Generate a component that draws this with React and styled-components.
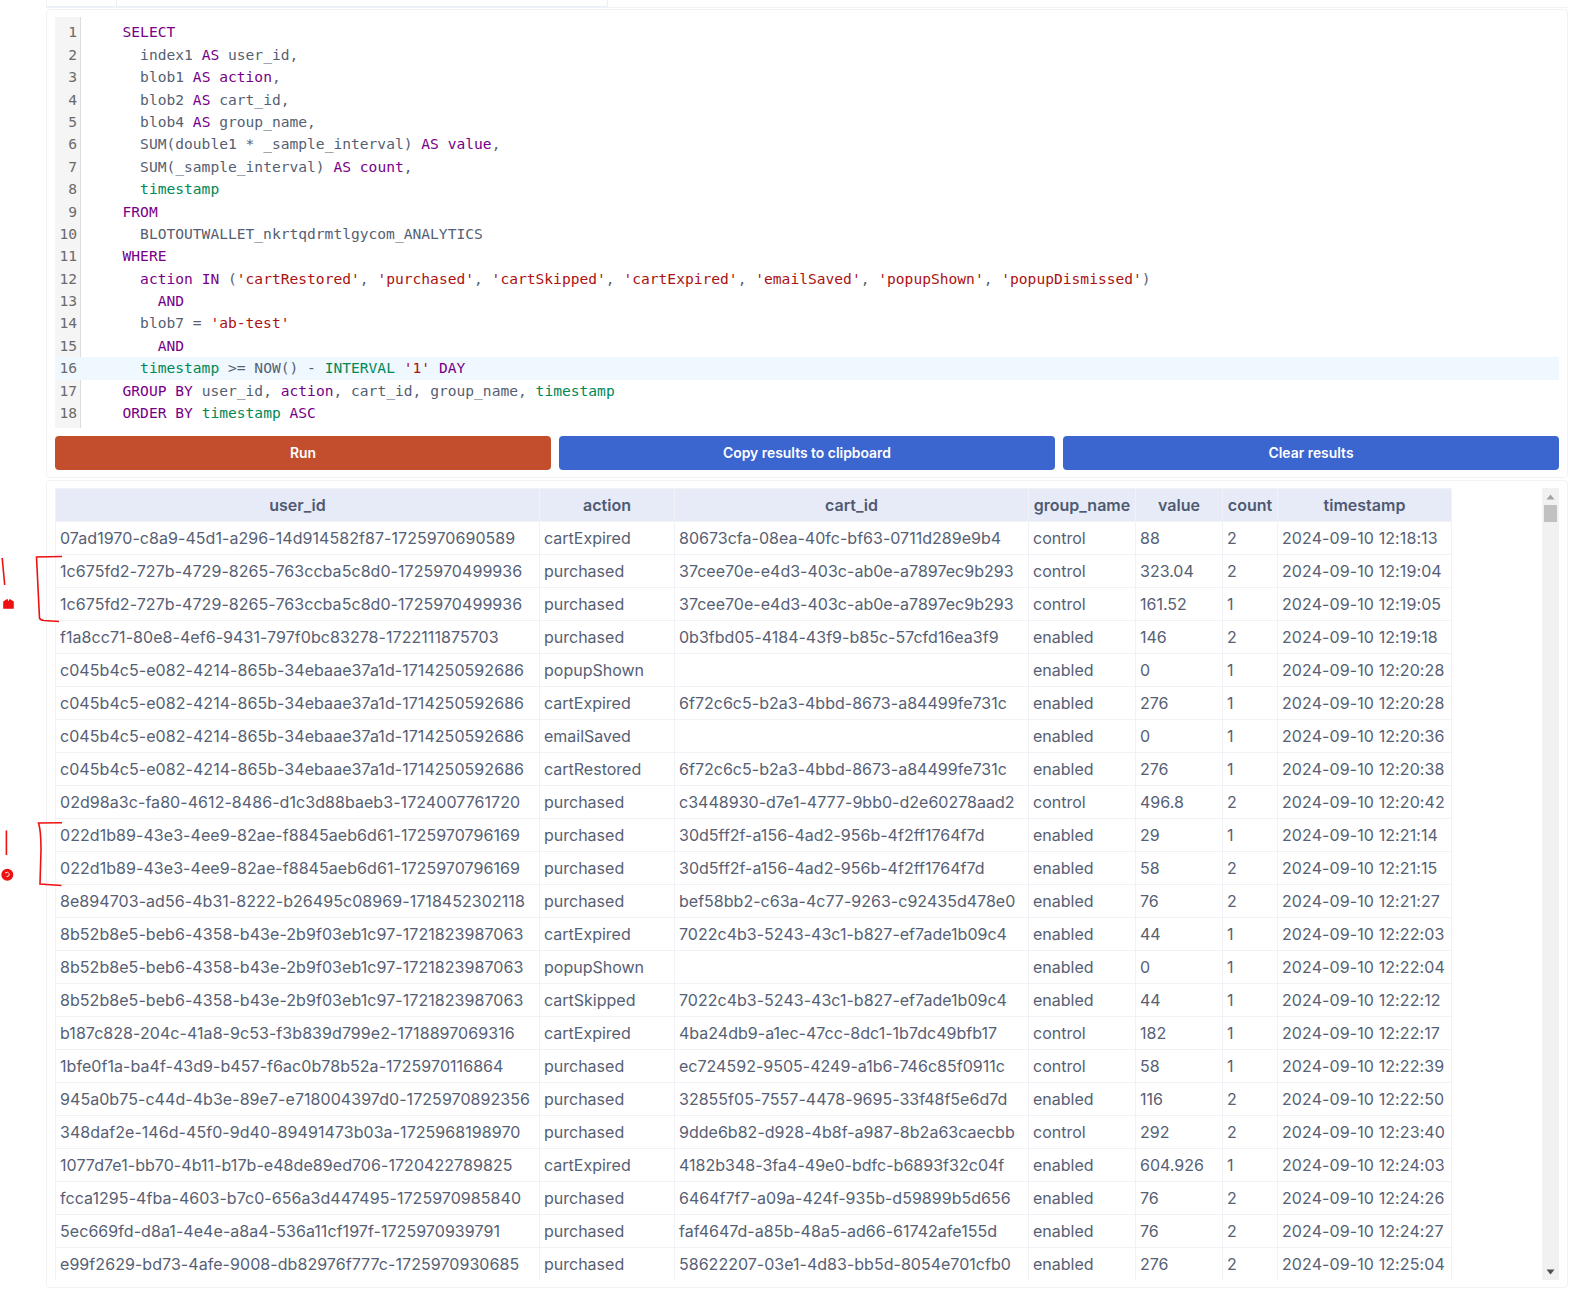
import React from "react";
import styled, { createGlobalStyle } from "styled-components";

const GlobalStyle = createGlobalStyle`
  html, body {
    margin: 0;
    padding: 0;
    background: #ffffff;
  }
`;

// Data
const SQL_LINES = [
  "    SELECT",
  "      index1 AS user_id,",
  "      blob1 AS action,",
  "      blob2 AS cart_id,",
  "      blob4 AS group_name,",
  "      SUM(double1 * _sample_interval) AS value,",
  "      SUM(_sample_interval) AS count,",
  "      timestamp",
  "    FROM",
  "      BLOTOUTWALLET_nkrtqdrmtlgycom_ANALYTICS",
  "    WHERE",
  "      action IN ('cartRestored', 'purchased', 'cartSkipped', 'cartExpired', 'emailSaved', 'popupShown', 'popupDismissed')",
  "        AND",
  "      blob7 = 'ab-test'",
  "        AND",
  "      timestamp >= NOW() - INTERVAL '1' DAY",
  "    GROUP BY user_id, action, cart_id, group_name, timestamp",
  "    ORDER BY timestamp ASC",
];

const KEYWORDS = new Set(["SELECT", "AS", "FROM", "WHERE", "IN", "AND", "GROUP", "BY", "ORDER", "ASC", "DAY", "action", "value", "count"]);
const BUILTINS = new Set(["timestamp", "INTERVAL"]);

const COLUMNS = [
  { name: "user_id", width: 484, spacing: 0.06 },
  { name: "action", width: 135, spacing: 0 },
  { name: "cart_id", width: 354, spacing: 0.02 },
  { name: "group_name", width: 107, spacing: 0 },
  { name: "value", width: 87, spacing: 0 },
  { name: "count", width: 55, spacing: 0 },
  { name: "timestamp", width: 174, spacing: 0.1 },
];

const ROWS = [
  ["07ad1970-c8a9-45d1-a296-14d914582f87-1725970690589", "cartExpired", "80673cfa-08ea-40fc-bf63-0711d289e9b4", "control", "88", "2", "2024-09-10 12:18:13"],
  ["1c675fd2-727b-4729-8265-763ccba5c8d0-1725970499936", "purchased", "37cee70e-e4d3-403c-ab0e-a7897ec9b293", "control", "323.04", "2", "2024-09-10 12:19:04"],
  ["1c675fd2-727b-4729-8265-763ccba5c8d0-1725970499936", "purchased", "37cee70e-e4d3-403c-ab0e-a7897ec9b293", "control", "161.52", "1", "2024-09-10 12:19:05"],
  ["f1a8cc71-80e8-4ef6-9431-797f0bc83278-1722111875703", "purchased", "0b3fbd05-4184-43f9-b85c-57cfd16ea3f9", "enabled", "146", "2", "2024-09-10 12:19:18"],
  ["c045b4c5-e082-4214-865b-34ebaae37a1d-1714250592686", "popupShown", "", "enabled", "0", "1", "2024-09-10 12:20:28"],
  ["c045b4c5-e082-4214-865b-34ebaae37a1d-1714250592686", "cartExpired", "6f72c6c5-b2a3-4bbd-8673-a84499fe731c", "enabled", "276", "1", "2024-09-10 12:20:28"],
  ["c045b4c5-e082-4214-865b-34ebaae37a1d-1714250592686", "emailSaved", "", "enabled", "0", "1", "2024-09-10 12:20:36"],
  ["c045b4c5-e082-4214-865b-34ebaae37a1d-1714250592686", "cartRestored", "6f72c6c5-b2a3-4bbd-8673-a84499fe731c", "enabled", "276", "1", "2024-09-10 12:20:38"],
  ["02d98a3c-fa80-4612-8486-d1c3d88baeb3-1724007761720", "purchased", "c3448930-d7e1-4777-9bb0-d2e60278aad2", "control", "496.8", "2", "2024-09-10 12:20:42"],
  ["022d1b89-43e3-4ee9-82ae-f8845aeb6d61-1725970796169", "purchased", "30d5ff2f-a156-4ad2-956b-4f2ff1764f7d", "enabled", "29", "1", "2024-09-10 12:21:14"],
  ["022d1b89-43e3-4ee9-82ae-f8845aeb6d61-1725970796169", "purchased", "30d5ff2f-a156-4ad2-956b-4f2ff1764f7d", "enabled", "58", "2", "2024-09-10 12:21:15"],
  ["8e894703-ad56-4b31-8222-b26495c08969-1718452302118", "purchased", "bef58bb2-c63a-4c77-9263-c92435d478e0", "enabled", "76", "2", "2024-09-10 12:21:27"],
  ["8b52b8e5-beb6-4358-b43e-2b9f03eb1c97-1721823987063", "cartExpired", "7022c4b3-5243-43c1-b827-ef7ade1b09c4", "enabled", "44", "1", "2024-09-10 12:22:03"],
  ["8b52b8e5-beb6-4358-b43e-2b9f03eb1c97-1721823987063", "popupShown", "", "enabled", "0", "1", "2024-09-10 12:22:04"],
  ["8b52b8e5-beb6-4358-b43e-2b9f03eb1c97-1721823987063", "cartSkipped", "7022c4b3-5243-43c1-b827-ef7ade1b09c4", "enabled", "44", "1", "2024-09-10 12:22:12"],
  ["b187c828-204c-41a8-9c53-f3b839d799e2-1718897069316", "cartExpired", "4ba24db9-a1ec-47cc-8dc1-1b7dc49bfb17", "control", "182", "1", "2024-09-10 12:22:17"],
  ["1bfe0f1a-ba4f-43d9-b457-f6ac0b78b52a-1725970116864", "purchased", "ec724592-9505-4249-a1b6-746c85f0911c", "control", "58", "1", "2024-09-10 12:22:39"],
  ["945a0b75-c44d-4b3e-89e7-e718004397d0-1725970892356", "purchased", "32855f05-7557-4478-9695-33f48f5e6d7d", "enabled", "116", "2", "2024-09-10 12:22:50"],
  ["348daf2e-146d-45f0-9d40-89491473b03a-1725968198970", "purchased", "9dde6b82-d928-4b8f-a987-8b2a63caecbb", "control", "292", "2", "2024-09-10 12:23:40"],
  ["1077d7e1-bb70-4b11-b17b-e48de89ed706-1720422789825", "cartExpired", "4182b348-3fa4-49e0-bdfc-b6893f32c04f", "enabled", "604.926", "1", "2024-09-10 12:24:03"],
  ["fcca1295-4fba-4603-b7c0-656a3d447495-1725970985840", "purchased", "6464f7f7-a09a-424f-935b-d59899b5d656", "enabled", "76", "2", "2024-09-10 12:24:26"],
  ["5ec669fd-d8a1-4e4e-a8a4-536a11cf197f-1725970939791", "purchased", "faf4647d-a85b-48a5-ad66-61742afe155d", "enabled", "76", "2", "2024-09-10 12:24:27"],
  ["e99f2629-bd73-4afe-9008-db82976f777c-1725970930685", "purchased", "58622207-03e1-4d83-bb5d-8054e701cfb0", "enabled", "276", "2", "2024-09-10 12:25:04"],
];

// Styled Components
const Page = styled.div`
  position: relative;
  width: 1522px;
  height: 1295px;
  margin-left: 46px;
  font-family: Inter, "Liberation Sans", sans-serif;
`;

const TabStrip = styled.div`
  display: flex;
  height: 7px;
  margin-bottom: 1px;
  border-bottom: 1px solid #f1f2f7;
  box-sizing: content-box;
`;

const TabStub = styled.div`
  width: ${({ $width }) => $width}px;
  height: 6px;
  border-bottom: 1px solid #e9f0f8;
  border-right: 1px solid #eeeff6;
  border-left: ${({ $first }) => ($first ? "1px solid #f1f2f7" : "none")};
`;

const Card = styled.section`
  border: 1px solid #f1f2f7;
  border-radius: 4px;
  padding: 7px 8px;
  background: #ffffff;
  margin-bottom: 2px;
`;

const Editor = styled.div`
  display: flex;
  flex-direction: column;
  padding: 4.4px 0 3.6px;
  background: linear-gradient(to right, #f5f5f5 25px, #dddddd 25px, #dddddd 26px, #ffffff 26px);
  font-family: "DejaVu Sans Mono", "Liberation Mono", monospace;
  font-size: 14.6px;
  line-height: 22.4px;
  color: #555f73;
`;

const CodeLine = styled.div`
  display: flex;
  height: 22.4px;
  background: ${({ $active }) => ($active ? "#f0f8ff" : "transparent")};
  white-space: pre;
`;

const LineNumber = styled.div`
  width: 22px;
  padding-right: 4px;
  margin-right: 6.4px;
  text-align: right;
  color: #6a6a6a;
  flex: none;
`;

const Token = styled.span`
  color: ${({ $kind }) =>
    ({ keyword: "#770088", builtin: "#008855", string: "#aa1111" }[$kind] || "inherit")};
`;

const ButtonRow = styled.div`
  display: flex;
  gap: 8px;
  margin-top: 8px;
`;

const ActionButton = styled.button`
  flex: 1;
  height: 34px;
  border: none;
  border-radius: 4px;
  background: ${({ $danger }) => ($danger ? "#c24e2d" : "#3b65cf")};
  color: #ffffff;
  font-family: inherit;
  font-size: 13.9px;
  font-weight: 600;
  cursor: pointer;
`;

const ResultsArea = styled.div`
  display: flex;
  justify-content: space-between;
  height: 792px;
  overflow: hidden;
`;

const ResultsTable = styled.table`
  width: 1396px;
  height: 792px;
  table-layout: fixed;
  border-collapse: collapse;
  font-size: 16px;
  color: #566074;
`;

const HeaderCell = styled.th`
  height: 33px;
  padding: 0 4px;
  box-sizing: border-box;
  background: #e6ebf7;
  border: 1px solid #f1f2f7;
  font-weight: 600;
  color: #4f5a72;
  text-align: center;
  white-space: nowrap;
`;

const Cell = styled.td`
  height: 33px;
  padding: 0 4px;
  box-sizing: border-box;
  border: 1px solid #f1f2f7;
  white-space: nowrap;
  letter-spacing: ${({ $spacing }) => $spacing}px;
`;

const ScrollTrack = styled.div`
  display: flex;
  flex-direction: column;
  justify-content: space-between;
  width: 17px;
  height: 792px;
  background: #f1f1f1;
`;

const ScrollTop = styled.div`
  display: flex;
  flex-direction: column;
  align-items: center;
`;

const ScrollArrow = styled.div`
  display: flex;
  align-items: center;
  justify-content: center;
  width: 17px;
  height: 17px;
`;

const ScrollThumb = styled.div`
  width: 13px;
  height: 17px;
  background: #c1c1c1;
`;

const Markup = styled.svg`
  position: absolute;
  left: -46px;
  top: 0;
  pointer-events: none;
`;

// Component
const tokenize = (line) =>
  line.split(/('[^']*'|[A-Za-z_][A-Za-z0-9_]*)/).map((part, i) => {
    let kind;
    if (part.startsWith("'")) kind = "string";
    else if (KEYWORDS.has(part)) kind = "keyword";
    else if (BUILTINS.has(part)) kind = "builtin";
    return (
      <Token key={i} $kind={kind}>
        {part}
      </Token>
    );
  });

export default function App() {
  return (
    <>
      <GlobalStyle />
      <Page>
        <TabStrip>
          <TabStub $first $width={69} />
          <TabStub $width={490} />
        </TabStrip>
        <Card>
          <Editor>
            {SQL_LINES.map((line, i) => (
              <CodeLine key={i} $active={i === 15}>
                <LineNumber>{i + 1}</LineNumber>
                <span>{tokenize(line)}</span>
              </CodeLine>
            ))}
          </Editor>
          <ButtonRow>
            <ActionButton $danger>Run</ActionButton>
            <ActionButton>Copy results to clipboard</ActionButton>
            <ActionButton>Clear results</ActionButton>
          </ButtonRow>
        </Card>
        <Card>
          <ResultsArea>
            <ResultsTable>
              <colgroup>
                {COLUMNS.map((col) => (
                  <col key={col.name} width={col.width} />
                ))}
              </colgroup>
              <thead>
                <tr>
                  {COLUMNS.map((col) => (
                    <HeaderCell key={col.name}>{col.name}</HeaderCell>
                  ))}
                </tr>
              </thead>
              <tbody>
                {ROWS.map((row, i) => (
                  <tr key={i}>
                    {row.map((value, j) => (
                      <Cell key={j} $spacing={COLUMNS[j].spacing}>
                        {value}
                      </Cell>
                    ))}
                  </tr>
                ))}
              </tbody>
            </ResultsTable>
            <ScrollTrack>
              <ScrollTop>
                <ScrollArrow>
                  <svg width="9" height="6" viewBox="0 0 9 6">
                    <path d="M4.5 0.5 L8.5 5.5 L0.5 5.5 Z" fill="#a3a3a3" />
                  </svg>
                </ScrollArrow>
                <ScrollThumb />
              </ScrollTop>
              <ScrollArrow>
                <svg width="9" height="6" viewBox="0 0 9 6">
                  <path d="M0.5 0.5 L8.5 0.5 L4.5 5.5 Z" fill="#505050" />
                </svg>
              </ScrollArrow>
            </ScrollTrack>
          </ResultsArea>
        </Card>
        {/* red pen marks drawn over the screenshot */}
        <Markup width="70" height="900" viewBox="0 0 70 900" fill="none" stroke="#ee1111" strokeWidth="1.6">
          <path d="M62 556.5 L36.5 557 Q38 590 39.5 618 Q40 620 44 620.5 L59 621.5" />
          <path d="M2.2 558 L4.7 585" />
          <path d="M4 608 L4 602 L7 600 L8 603 L10 600 L13 602 L13 608 Z" fill="#ee1111" />
          <path d="M62 822.7 L38.5 823 Q41 830 41 850 L40 884 L61.5 885.5" />
          <path d="M6.4 830.5 L6.4 855" />
          <circle cx="7.3" cy="874.7" r="5.2" fill="#ee1111" />
          <path d="M5 873 Q8 871 9.5 874 Q9 877 6.5 876.5" stroke="#ffffff" strokeWidth="0.9" />
        </Markup>
      </Page>
    </>
  );
}
